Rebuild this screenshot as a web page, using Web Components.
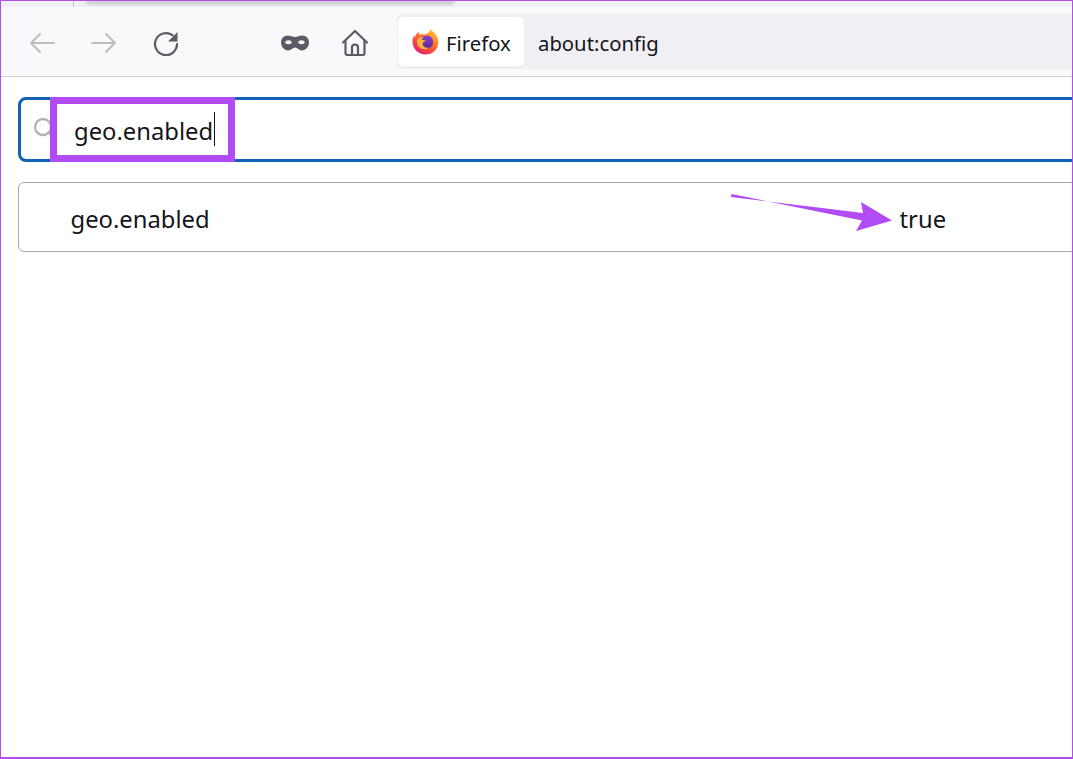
<!DOCTYPE html>
<html>
<head>
<meta charset="utf-8">
<title>about:config</title>
<style>
  html, body { margin: 0; height: 100%; background: #fff; }
  body { font-family: "Noto Sans", "Open Sans", sans-serif; color: #15141a; overflow: hidden; }
</style>
</head>
<body>
<shot-frame>
  <browser-toolbar url="about:config" chip="Firefox"></browser-toolbar>
  <config-search value="geo.enabled"></config-search>
  <config-row name="geo.enabled" value="true"></config-row>
</shot-frame>

<script>
class ShotFrame extends HTMLElement {
  constructor() {
    super();
    this.attachShadow({ mode: "open" });
    this.shadowRoot.innerHTML = /* html */`
    <style>
      :host {
        display: block;
        box-sizing: border-box;
        width: 1073px;
        height: 759px;
        border: solid #b14fe8;
        border-width: 1px 1px 2px 1px;
        overflow: hidden;
        position: relative;
      }
    </style>
    <slot></slot>`;
  }
}

class BrowserToolbar extends HTMLElement {
  constructor() {
    super();
    this.attachShadow({ mode: "open" });
  }

  connectedCallback() {
    this.shadowRoot.innerHTML = /* html */`
    <style>
      :host { display: block; }
      .tabstrip {
        height: 6px;
        background: #f0f0f4;
        position: relative;
        overflow: hidden;
      }
      .tabstrip i {
        position: absolute;
        left: 72px;
        top: 0;
        width: 1px;
        height: 6px;
        background: #c4c4c8;
      }
      .tabstrip b {
        position: absolute;
        left: 84px;
        top: -1px;
        width: 370px;
        height: 5px;
        background: #cfccd6;
        border-radius: 0 0 6px 6px;
        filter: blur(1.5px);
      }
      .bar {
        height: 70px;
        box-sizing: border-box;
        border-bottom: 1px solid #cfcfd8;
        background: #f9f9fb;
        display: flex;
        align-items: center;
      }
      .icon { flex: none; display: block; }
      .nav { margin-top: 2px; }
      .urlbar {
        flex: 1;
        height: 55px;
        margin-left: 28px;
        background: #f0f0f4;
        display: flex;
        align-items: center;
        font-size: 20.3px;
        border-radius: 5px 0 0 5px;
      }
      .chip {
        height: 49px;
        width: 126px;
        box-sizing: border-box;
        margin-left: 1px;
        padding: 0 0 0 14px;
        background: #fff;
        border-radius: 5px;
        display: flex;
        align-items: center;
        gap: 7px;
      }
      .label { padding-top: 3px; }
      .url { margin-left: 14px; padding-top: 3px; }
    </style>
    <div class="tabstrip"><i></i><b></b></div>
    <div class="bar">
      <svg class="icon nav" style="margin-left:28px" width="26" height="26" viewBox="0 0 26 26" fill="none" stroke="#bdbdc1" stroke-width="2" stroke-linecap="round" stroke-linejoin="round">
        <path d="M25 13H2M11 4 2 13l9 9"/>
      </svg>
      <svg class="icon nav" style="margin-left:36px" width="26" height="26" viewBox="0 0 26 26" fill="none" stroke="#bdbdc1" stroke-width="2" stroke-linecap="round" stroke-linejoin="round">
        <path d="M1 13h23M15 4l9 9-9 9"/>
      </svg>
      <svg class="icon nav" style="margin-left:36px" width="26" height="26" viewBox="0 0 26 26" fill="none" stroke="#5b5b66" stroke-width="2.2" stroke-linecap="round">
        <path d="M19.5 5.200A11 11 0 1 0 24 14"/>
        <path d="M24.500 2v9.500H15z" fill="#5b5b66" stroke="none"/>
      </svg>
      <svg class="icon nav" style="margin-left:102px" width="28" height="16" viewBox="0 0 28 16">
        <path fill="#5b5b66" fill-rule="evenodd" d="M7 .5c2.600 0 4.600 1.400 7 1.400S18.400.5 21 .5c4 0 7 2.800 7 6.800 0 4.700-3.200 8.200-7 8.200-3.200 0-4.800-3-7-3s-3.800 3-7 3c-3.800 0-7-3.500-7-8.200C0 3.300 3 .5 7 .5ZM7.500 5.300c-1.800 0-3.200.9-3.200 2 0 1.100 1.400 2 3.200 2s3.200-.9 3.200-2c0-1.100-1.400-2-3.200-2Zm13 0c-1.800 0-3.200.9-3.200 2 0 1.100 1.400 2 3.200 2s3.200-.9 3.200-2c0-1.100-1.400-2-3.200-2Z"/>
      </svg>
      <svg class="icon nav" style="margin-left:32px" width="28" height="28" viewBox="0 0 28 28" fill="none" stroke="#5b5b66" stroke-width="2.2" stroke-linecap="round" stroke-linejoin="round">
        <path d="M2 13.500 14 2l12 11.500"/>
        <path d="M4.500 11.500V24a2 2 0 0 0 2 2h15a2 2 0 0 0 2-2V11.500"/>
        <path d="M11 26v-7.500a3 3 0 0 1 6 0V26"/>
      </svg>
      <div class="urlbar">
        <div class="chip">
          <svg class="icon" width="27" height="27" viewBox="0 0 27 27">
            <defs>
              <linearGradient id="fx-a" x1="0.8" y1="0.1" x2="0.2" y2="0.95">
                <stop offset="0" stop-color="#ffbd2e"/>
                <stop offset="0.45" stop-color="#ff6a2b"/>
                <stop offset="1" stop-color="#e31e6b"/>
              </linearGradient>
              <linearGradient id="fx-b" x1="0.5" y1="0" x2="0.5" y2="1">
                <stop offset="0" stop-color="#8d3ec9"/>
                <stop offset="1" stop-color="#5a2a9e"/>
              </linearGradient>
            </defs>
            <path fill="url(#fx-a)" d="M18 .5c1 2.500 5.500 4 7 8 1.500 3 1.800 6.500.8 9.500-1.700 5.200-6.500 8.500-12.300 8.500C6.200 26.500.5 20.800.5 13.500c0-2.300.6-4.500 1.700-6.300.1 1 .5 1.800 1 2.300C3.400 7 5 4.600 7 3.800c-.3 1.200-.1 2.200.6 3C9.500 5.600 11.500 5.800 13 6.500 15.800 5.500 18.500 3.700 18 .5Z"/>
            <circle cx="14.500" cy="14" r="6.600" fill="url(#fx-b)"/>
            <path fill="#ffb53a" d="M5.300 11.500c1.500-1.700 4-2.500 6.200-2-.9.700-1.800 1.500-1.700 2.500 1.600-.2 3.300.2 4.200 1.200-1.500-.2-3.300.8-3.300 2.800 0 2.600 3.300 4.500 6.300 3.400-2.500 2.700-7.300 2.400-10-.4-1.800-1.900-2.400-5-1.700-7.500Z"/>
          </svg>
          <span class="label">${this.getAttribute("chip")}</span>
        </div>
        <span class="url">${this.getAttribute("url")}</span>
      </div>
    </div>`;
  }
}

class ConfigSearch extends HTMLElement {
  constructor() {
    super();
    this.attachShadow({ mode: "open" });
  }

  connectedCallback() {
    this.shadowRoot.innerHTML = /* html */`
    <style>
      :host {
        display: block;
        position: relative;
        margin: 20px -12px 0 17px;
      }
      .box {
        height: 65px;
        box-sizing: border-box;
        border: 3px solid #0f62b4;
        border-radius: 8px;
        display: flex;
        align-items: center;
        font-size: 23.8px;
        padding-left: 12px;
        background: #fff;
      }
      .value { margin-left: 15px; padding-top: 2px; display: flex; align-items: center; }
      .caret { width: 1px; height: 34px; background: #15141a; margin-left: 1px; margin-top: -3px; }
      .mark {
        position: absolute;
        left: 32px;
        top: 0;
        width: 185px;
        height: 65px;
        box-sizing: border-box;
        border: 7px solid #b14bf4;
      }
    </style>
    <div class="box">
      <svg width="26" height="26" viewBox="0 0 26 26" fill="none" stroke="#b4b4b8" stroke-width="2.300" stroke-linecap="round">
        <circle cx="10" cy="10" r="8"/>
        <path d="M16 16l7 7"/>
      </svg>
      <span class="value">${this.getAttribute("value")}<span class="caret"></span></span>
    </div>
    <div class="mark"></div>`;
  }
}

class ConfigRow extends HTMLElement {
  constructor() {
    super();
    this.attachShadow({ mode: "open" });
  }

  connectedCallback() {
    this.shadowRoot.innerHTML = /* html */`
    <style>
      :host {
        display: block;
        position: relative;
        margin: 20px -12px 0 17px;
      }
      .row {
        height: 70px;
        box-sizing: border-box;
        border: 1px solid #a9a9ad;
        border-radius: 6px;
        display: grid;
        grid-template-columns: 829px 1fr;
        align-items: center;
        font-size: 23.8px;
        padding: 3px 0 0 51.5px;
      }
      .arrow { position: absolute; left: 712px; top: 11px; }
    </style>
    <div class="row">
      <span>${this.getAttribute("name")}</span>
      <span>${this.getAttribute("value")}</span>
    </div>
    <svg class="arrow" width="164" height="40" viewBox="0 0 164 40">
      <path fill="#b14bf4" d="M1.500 1 1 4 133 20 131 9 162 27.500 126 38 132 27.500Z"/>
    </svg>`;
  }
}

customElements.define("shot-frame", ShotFrame);
customElements.define("browser-toolbar", BrowserToolbar);
customElements.define("config-search", ConfigSearch);
customElements.define("config-row", ConfigRow);
</script>
</body>
</html>
